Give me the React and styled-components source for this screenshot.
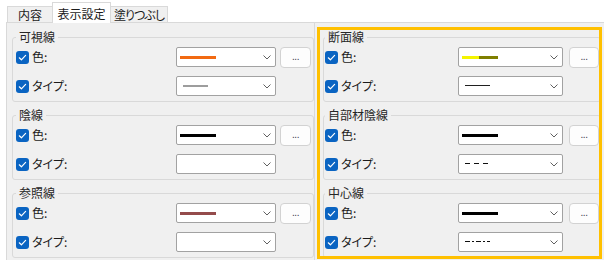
import React from "react";
import styled, { createGlobalStyle } from "styled-components";

const GlobalStyle = createGlobalStyle`
  html, body {
    margin: 0;
    padding: 0;
    background: #ffffff;
  }
  body {
    font-family: "Noto Sans CJK JP", "Noto Sans", sans-serif;
    font-size: 12px;
    color: #1b1b1b;
    font-feature-settings: "palt";
  }
  * {
    box-sizing: border-box;
  }
`;

const leftGroups = [
  { title: "可視線", color: "#f26a12", type: { stroke: "#9d9d9d", width: 2, dash: "none", y: 2 } },
  { title: "陰線", color: "#000000", type: null },
  { title: "参照線", color: "#944b4b", type: null },
];

const rightGroups = [
  {
    title: "断面線",
    color: "linear-gradient(to right, #f4f400 0 17px, #7f7f00 17px 36px)",
    type: { stroke: "#202020", width: 1, dash: "none", y: 1.5 },
  },
  { title: "自部材陰線", color: "#000000", type: { stroke: "#101010", width: 1, dash: "5 4", y: 1.5 } },
  { title: "中心線", color: "#000000", type: { stroke: "#101010", width: 1, dash: "5 2 2 2", y: 1.5 } },
];

const App = () => {
  return (
    <Window>
      <GlobalStyle />
      <TabStrip>
        <Tab $width={46}>内容</Tab>
        <Tab $width={59} $active>
          表示設定
        </Tab>
        <Tab $width={58} $tight>
          塗りつぶし
        </Tab>
      </TabStrip>
      <Panel>
        <LeftColumn>
          {leftGroups.map((g) => (
            <LineGroup key={g.title} group={g} side="left" />
          ))}
        </LeftColumn>
        <Highlight>
          {rightGroups.map((g) => (
            <LineGroup key={g.title} group={g} side="right" />
          ))}
        </Highlight>
      </Panel>
    </Window>
  );
};

const LineGroup = ({ group, side }) => {
  const isLeft = side === "left";
  return (
    <Group $left={isLeft}>
      <Legend>{group.title}</Legend>
      <Rows $combo={isLeft ? 100 : 105} $button={isLeft ? 31 : 30} $gap={isLeft ? 4 : 6}>
        <CheckLabel>
          <CheckBox />
          色:
        </CheckLabel>
        <Combo>
          <Swatch $fill={group.color} />
          <Chevron />
        </Combo>
        <MoreButton>...</MoreButton>
        <CheckLabel>
          <CheckBox />
          タイプ:
        </CheckLabel>
        <Combo $inset={6}>
          {group.type && <LineSample {...group.type} />}
          <Chevron />
        </Combo>
      </Rows>
    </Group>
  );
};

const CheckBox = () => (
  <Box>
    <svg width="13" height="13" viewBox="0 0 13 13">
      <polyline
        points="3.3,6.8 5.4,8.8 9.6,4.4"
        fill="none"
        stroke="#ffffff"
        strokeWidth="1.2"
        strokeLinecap="round"
        strokeLinejoin="round"
      />
    </svg>
  </Box>
);

const Chevron = () => (
  <ChevronIcon width="8" height="5" viewBox="0 0 8 5">
    <polyline points="0.5,0.5 4,4 7.5,0.5" fill="none" stroke="#606060" strokeWidth="1" />
  </ChevronIcon>
);

const LineSample = ({ stroke, width, dash, y }) => (
  <svg width="26" height="4" viewBox="0 0 26 4">
    <line x1="0" y1={y} x2="25" y2={y} stroke={stroke} strokeWidth={width} strokeDasharray={dash} />
  </svg>
);

const Window = styled.div`
  width: 604px;
  height: 260px;
  overflow: hidden;
  display: flex;
  flex-direction: column;
  background: #ffffff;
`;

const TabStrip = styled.div`
  display: flex;
  align-items: flex-end;
  height: 22px;
  padding-left: 7px;
  position: relative;
  z-index: 1;
`;

const Tab = styled.div`
  width: ${(p) => p.$width}px;
  height: ${(p) => (p.$active ? 21 : 16)}px;
  margin-bottom: ${(p) => (p.$active ? -1 : 0)}px;
  display: flex;
  align-items: center;
  justify-content: center;
  background: ${(p) => (p.$active ? "#ffffff" : "#f0f0f0")};
  border: 1px solid #d9d9d9;
  border-bottom: none;
  margin-right: -1px;
  color: #1b1b1b;
  white-space: nowrap;
  letter-spacing: ${(p) => (p.$tight ? -1 : 0)}px;
`;

const Panel = styled.div`
  flex: 1;
  margin-left: 6px;
  background: #f0f0f0;
  border-top: 1px solid #d9d9d9;
  border-left: 1px solid #d9d9d9;
  display: grid;
  grid-template-columns: 308px 285px;
  column-gap: 2px;
  align-items: start;
`;

const LeftColumn = styled.div`
  height: 237px;
  padding: 7px 0 0 5px;
  border-right: 1px solid #d9d9d9;
`;

const Highlight = styled.div`
  margin-top: 4px;
  height: 232px;
  border: 3px solid #ffc000;
  padding-left: 3px;
  overflow: hidden;
`;

const Group = styled.fieldset`
  margin: 0 ${(p) => (p.$left ? 0 : -2)}px 6px 0;
  padding: 3px ${(p) => (p.$left ? 2 : 1)}px 5px ${(p) => (p.$left ? 2 : 0)}px;
  border: 1px solid #d9d9d9;
  border-radius: 3px;
  min-width: 0;
`;

const Legend = styled.legend`
  margin-left: 1px;
  padding: 0 3px;
  height: 14px;
  line-height: 14px;
  font-size: 12px;
  color: #262626;
`;

const Rows = styled.div`
  display: grid;
  grid-template-columns: 1fr ${(p) => p.$combo}px ${(p) => p.$button}px;
  grid-auto-rows: 20px;
  column-gap: ${(p) => p.$gap}px;
  row-gap: 9px;
`;

const CheckLabel = styled.label`
  grid-column: 1;
  display: flex;
  align-items: center;
  gap: 3px;
  white-space: nowrap;
  padding-left: 1px;
  line-height: 14px;
`;

const Box = styled.span`
  width: 13px;
  height: 13px;
  border-radius: 3px;
  background: #0a64c2;
  display: inline-flex;
  flex-shrink: 0;
`;

const Combo = styled.div`
  grid-column: 2;
  position: relative;
  height: 20px;
  background: #ffffff;
  border: 1px solid #a2a2a2;
  border-radius: 2px;
  display: flex;
  align-items: center;
  padding-left: ${(p) => p.$inset ?? 3}px;
`;

const Swatch = styled.span`
  width: 36px;
  height: 3px;
  background: ${(p) => p.$fill};
`;

const ChevronIcon = styled.svg`
  position: absolute;
  right: 4px;
  top: 7px;
`;

const MoreButton = styled.button`
  grid-column: 3;
  height: 21px;
  margin: 0;
  padding: 0 0 2px;
  background: #fdfdfd;
  border: 1px solid #d2d2d2;
  border-radius: 4px;
  font-family: "Liberation Sans", sans-serif;
  font-size: 10px;
  color: #3a3a4a;
  letter-spacing: -0.5px;
  display: flex;
  align-items: flex-end;
  justify-content: center;
  line-height: 16px;
`;

export default App;
